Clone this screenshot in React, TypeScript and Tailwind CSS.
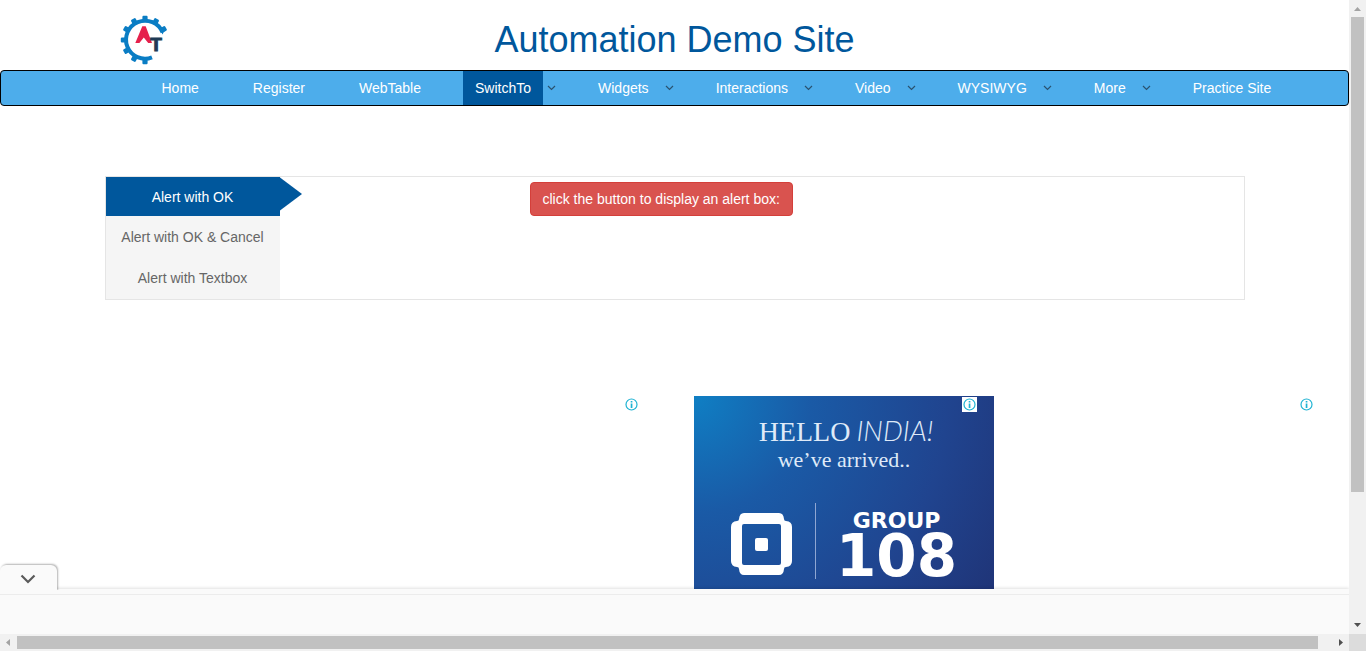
import React from "react";

type NavItem = { label: string; menu?: boolean; active?: boolean };

const navItems: NavItem[] = [
  { label: "Home" },
  { label: "Register" },
  { label: "WebTable" },
  { label: "SwitchTo", menu: true, active: true },
  { label: "Widgets", menu: true },
  { label: "Interactions", menu: true },
  { label: "Video", menu: true },
  { label: "WYSIWYG", menu: true },
  { label: "More", menu: true },
  { label: "Practice Site" },
];

const tabs = ["Alert with OK", "Alert with OK & Cancel", "Alert with Textbox"];
const gearTeeth = [30, 60, 90, 120, 150, 180, 210, 240, 270];

function Logo() {
  return (
    <svg viewBox="0 0 50 52" className="h-[52px] w-[50px]" aria-label="Automation Testing">
      <g fill="#0a7dc4">
        {gearTeeth.map((angle) => (
          <path
            key={angle}
            d="M43 22 L45 23.4 H48 Q49.2 23.4 49.2 24.4 V27.6 Q49.2 28.6 48 28.6 H45 L43 30 Z"
            transform={`rotate(${-angle} 25 26)`}
          />
        ))}
      </g>
      <path
        d="M42.6 18.5 A19 19 0 1 0 32 43.4"
        fill="none"
        stroke="#0a7dc4"
        strokeWidth="4"
      />
      <path d="M22.3 12.3 H25.7 L32 29 H28.2 L23.8 23.5 L19.4 29 H15.3 Z" fill="#e5214c" />
      <text
        x="36"
        y="37"
        textAnchor="middle"
        fontSize="19"
        fontWeight="700"
        fill="#203b55"
        stroke="#203b55"
        strokeWidth="1"
        className="font-['Liberation_Sans',sans-serif]"
      >
        T
      </text>
    </svg>
  );
}

function AdInfo({ filled = false }: { filled?: boolean }) {
  return (
    <button
      type="button"
      aria-label="About this ad"
      className={`absolute right-[17px] top-px size-[15px] ${filled ? "bg-white" : ""}`}
    >
      <svg viewBox="0 0 15 15" className="size-full">
        <circle cx="7.5" cy="7.5" r="5.5" fill="none" stroke="#1fb3d3" strokeWidth="1.2" />
        <path d="M6.7 4h1.7v1.5H6.7zM6.7 6.4h1.7V11H6.7z" fill="#1fb3d3" />
      </svg>
    </button>
  );
}

function GroupAd() {
  return (
    <a
      href="#group108"
      className="block h-[250px] w-[300px] bg-[radial-gradient(circle_at_0%_0%,#0f7fc4_0%,#1a5aa6_30%,#20448f_65%,#1f2f70_100%)] pt-[18px] text-white"
    >
      <div className="flex items-baseline justify-center gap-1.5 pl-1 font-['Liberation_Serif',serif] text-[28px] leading-8 text-[#dfeaf8]">
        <span>HELLO</span>
        <span className="font-['Lato',sans-serif] font-light italic">INDIA!</span>
      </div>
      <div className="text-center font-['Liberation_Serif',serif] text-[22px] leading-6 text-[#dfeaf8]">
        we’ve arrived..
      </div>
      <div className="mt-[31px] flex items-start pl-[37px]">
        <svg viewBox="0 0 61 62" className="mt-[10px] h-[62px] w-[61px]">
          <path
            d="M13 0H48Q52.5 0 53 6Q53 8 55 8Q61 8.5 61 14V48Q61 53.5 55 54Q53 54 53 56Q52.5 62 48 62H13Q8.5 62 8 56Q8 54 6 54Q0 53.5 0 48V14Q0 8.5 6 8Q8 8 8 6Q8.5 0 13 0ZM13 11Q11 11 11 13V50Q11 52 13 52H48Q50 52 50 50V13Q50 11 48 11Z"
            fill="white"
            fillRule="evenodd"
          />
          <rect x="24" y="25" width="13" height="13" rx="2" fill="white" />
        </svg>
        <span className="ml-[23px] h-[76px] w-px bg-[#8fa6d2]" />
        <div className="ml-5 flex flex-col items-center font-['DejaVu_Sans',sans-serif] font-bold">
          <span className="mt-1.5 text-[22px] leading-6">GROUP</span>
          <span className="mt-0.5 text-[58px] leading-[42px]">108</span>
        </div>
      </div>
    </a>
  );
}

function VerticalScrollbar() {
  return (
    <div className="flex w-[17px] flex-col items-center bg-[#f1f1f1]">
      <svg viewBox="0 0 17 17" className="size-[17px]">
        <path d="M5 11L8.5 7L12 11Z" fill="#a3a3a3" />
      </svg>
      <div className="min-h-0 w-[13px] flex-[475] bg-[#c1c1c1]" />
      <div className="min-h-0 flex-[125]" />
      <svg viewBox="0 0 17 17" className="size-[17px]">
        <path d="M5 6H12L8.5 10Z" fill="#505050" />
      </svg>
    </div>
  );
}

function HorizontalScrollbar() {
  return (
    <div className="flex h-[17px] items-center bg-[#f1f1f1]">
      <svg viewBox="0 0 17 17" className="size-[17px]">
        <path d="M10 5V12L6 8.5Z" fill="#a3a3a3" />
      </svg>
      <div className="h-[13px] flex-[1301] bg-[#c1c1c1]" />
      <div className="flex-[14]" />
      <svg viewBox="0 0 17 17" className="size-[17px]">
        <path d="M7 5V12L11 8.5Z" fill="#505050" />
      </svg>
    </div>
  );
}

export default function App() {
  return (
    <div className="grid h-screen grid-cols-[minmax(0,1fr)_17px] grid-rows-[minmax(0,1fr)_17px] bg-white font-['Liberation_Sans',Arial,sans-serif] text-sm text-[#333]">
      <div className="flex min-h-0 flex-col overflow-hidden">
        <div className="min-h-0 flex-1 overflow-hidden">
          <header className="mx-auto grid h-[70px] max-w-[1110px] grid-cols-[1fr_auto_1fr] items-center">
            <div className="pt-2.5">
              <Logo />
            </div>
            <h1 className="pt-2.5 text-4xl text-[#00579c]">Automation Demo Site</h1>
          </header>

          <nav className="h-9 rounded border border-black bg-[#4dadeb]">
            <ul className="mx-auto flex h-full max-w-[1170px] gap-[30px] pl-[60px]">
              {navItems.map((item) => (
                <li key={item.label} className="flex shrink-0 items-center">
                  <a
                    href="#"
                    className={`flex h-full items-center whitespace-nowrap px-3 text-white ${
                      item.active ? "bg-[#00579c]" : ""
                    }`}
                  >
                    {item.label}
                  </a>
                  {item.menu && (
                    <span className="flex w-[13px] justify-end">
                      <svg viewBox="0 0 9 6" className="h-1.5 w-[9px]">
                        <path d="M1 1L4.5 4.5L8 1" fill="none" stroke="#2a526f" strokeWidth="1.2" />
                      </svg>
                    </span>
                  )}
                </li>
              ))}
            </ul>
          </nav>

          <main>
            <section className="mx-auto mt-[70px] flex max-w-[1140px] border border-[#e5e5e5]">
              <ul className="flex w-[174px] shrink-0 flex-col gap-0.5 bg-[#f5f5f5] pb-px">
                {tabs.map((tab, i) => (
                  <li key={tab} className="relative">
                    <a
                      href="#"
                      className={`flex h-[39px] justify-center ${
                        i === 0 ? "items-center bg-[#00579c] text-white" : "pt-[9px] text-[#666]"
                      }`}
                    >
                      {tab}
                    </a>
                    {i === 0 && (
                      <svg viewBox="0 0 22 34" className="absolute left-full top-0 h-[34px] w-[22px]">
                        <path d="M0 0.5L22 17L0 33.5Z" fill="#00579c" />
                      </svg>
                    )}
                  </li>
                ))}
              </ul>
              <div className="flex-1 pl-[250px] pt-[5px]">
                <button
                  type="button"
                  className="h-[34px] rounded border border-[#d43f3a] bg-[#d9534f] px-3 text-white"
                >
                  click the button to display an alert box:
                </button>
              </div>
            </section>

            <div className="mt-24 grid grid-cols-[656fr_338fr_337fr] pr-[18px]">
              <div className="relative h-[250px]">
                <AdInfo />
              </div>
              <div className="relative flex h-[250px] justify-end">
                <GroupAd />
                <AdInfo filled />
              </div>
              <div className="relative h-[250px]">
                <AdInfo />
              </div>
            </div>
          </main>
        </div>

        <aside className="relative h-[45px] shrink-0 bg-[#fafafa] shadow-[0_-1px_3px_rgba(0,0,0,0.12)]">
          <div className="h-1.5 border-b border-[#ececec]" />
          <button
            type="button"
            aria-label="Hide banner"
            className="absolute -top-6 left-0 flex h-[26px] w-[57px] items-center justify-center rounded-t-md bg-[#fafafa] pr-0.5 pt-0.5 shadow-[1px_-1px_2px_rgba(0,0,0,0.3)] [clip-path:inset(-4px_-4px_1px_0)]"
          >
            <svg viewBox="0 0 16 10" className="h-[10px] w-4">
              <path d="M1.5 1.5L8 8L14.5 1.5" fill="none" stroke="#5a5a5a" strokeWidth="2.2" />
            </svg>
          </button>
        </aside>
      </div>
      <VerticalScrollbar />
      <HorizontalScrollbar />
      <div className="bg-[#dcdcdc]" />
    </div>
  );
}
